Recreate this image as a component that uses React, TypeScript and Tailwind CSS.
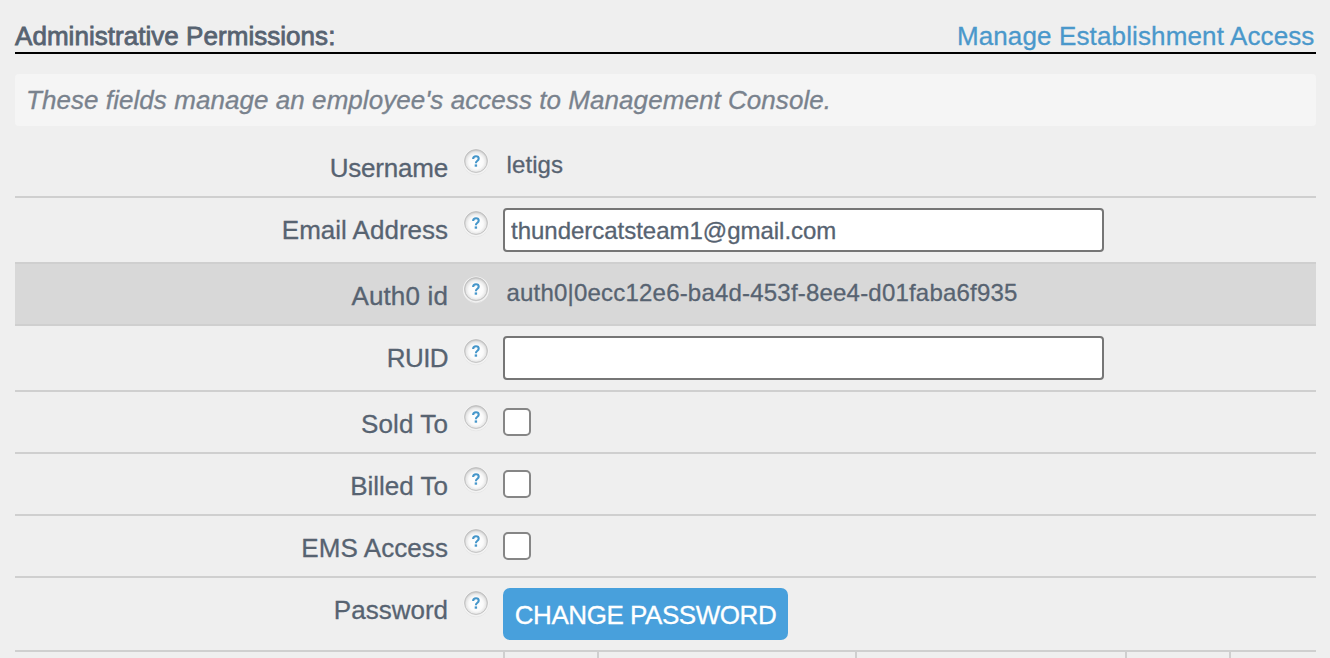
import type { ReactNode } from "react";

function HelpIcon() {
  return (
    <svg className="mt-[10px] ml-[12px] block h-[32px] w-[32px] shrink-0" viewBox="0 0 32 32" aria-hidden="true">
      <defs>
        <radialGradient id="helpFill" cx="50%" cy="54%" r="52%">
          <stop offset="0%" stopColor="#ffffff" />
          <stop offset="60%" stopColor="#fafafa" />
          <stop offset="84%" stopColor="#e7e7e7" />
          <stop offset="100%" stopColor="#c6c6c6" />
        </radialGradient>
      </defs>
      <circle cx="16" cy="16.2" r="12.6" fill="none" stroke="#e6e6e6" strokeWidth="1" />
      <circle cx="16" cy="15.4" r="12.4" fill="none" stroke="#f3f3f3" strokeWidth="1.2" />
      <circle cx="16" cy="15" r="11.4" fill="url(#helpFill)" stroke="#bfbfbf" strokeWidth="0.9" />
      <path d="M13.1 13C13.2 11.1 14.3 10.3 16 10.3C17.7 10.3 18.7 11.3 18.7 12.7C18.7 14.7 15.9 14.8 15.9 17.2" fill="none" stroke="#4596ca" strokeWidth="2.1" />
      <rect x="14.7" y="18.4" width="2.4" height="2.3" fill="#4596ca" />
    </svg>
  );
}

type RowProps = {
  label: string;
  height: string;
  tracking?: string;
  shaded?: boolean;
  children: ReactNode;
};

function Row({ label, height, tracking = "", shaded = false, children }: RowProps) {
  return (
    <div className={`flex shrink-0 items-start border-b-2 border-[#cfcfcf] ${height} ${shaded ? "bg-[#d8d8d8]" : ""}`}>
      <div className={`w-[433px] shrink-0 pt-[17px] text-right text-[26px] leading-[30px] whitespace-nowrap ${tracking}`}>{label}</div>
      <HelpIcon />
      <div className="ml-[11px]">{children}</div>
    </div>
  );
}

function Value({ children, tracking }: { children: ReactNode; tracking: string }) {
  return <div className={`pt-[15px] pl-[3.5px] text-[24px] leading-[28px] whitespace-nowrap ${tracking}`}>{children}</div>;
}

function TextField({ value, label }: { value: string; label: string }) {
  return (
    <input
      type="text"
      aria-label={label}
      defaultValue={value}
      className="mt-[10px] block h-[44px] w-[601px] rounded-[4px] border-2 border-[#767676] bg-white px-[6px] pt-[2px] text-[24px] leading-[28px] tracking-[-0.02px] outline-none"
    />
  );
}

function Checkbox({ label }: { label: string }) {
  return (
    <input
      type="checkbox"
      aria-label={label}
      className="mt-[16px] block h-[28px] w-[28px] appearance-none rounded-[5px] border-2 border-[#868686] bg-white"
    />
  );
}

export default function App() {
  return (
    <main className="flex h-[658px] w-[1330px] flex-col overflow-hidden bg-[#efefef] pr-[14px] pl-[15px] font-['Liberation_Sans',Arial,sans-serif] text-[#576371] [-webkit-text-stroke:0.3px_currentColor]">
      <header className="flex h-[54px] shrink-0 items-start justify-between border-b-2 border-black pt-[21px] text-[26px] leading-[30px]">
        <h1 className="tracking-[0.04px] [-webkit-text-stroke:0.8px_#576371]">Administrative Permissions:</h1>
        <a href="#" className="pr-[1.5px] tracking-[0.13px] text-[#4a98cb] [-webkit-text-stroke:0.3px_#4a98cb]">Manage Establishment Access</a>
      </header>
      <p className="mt-[20px] mb-[10px] h-[52px] shrink-0 rounded-[4px] bg-[#f5f5f5] pt-[11px] pl-[11px] text-[26px] leading-[30px] tracking-[0.06px] text-[#79828d] italic [-webkit-text-stroke:0.3px_#79828d]">
        These fields manage an employee's access to Management Console.
      </p>
      <section className="flex shrink-0 flex-col">
        <Row label="Username" height="h-[62px]" tracking="tracking-[-0.2px]">
          <Value tracking="tracking-[0.1px]">letigs</Value>
        </Row>
        <Row label="Email Address" height="h-[66px]">
          <TextField label="Email Address" value="thundercatsteam1@gmail.com" />
        </Row>
        <Row label="Auth0 id" height="h-[62px]" tracking="tracking-[0.15px]" shaded>
          <Value tracking="tracking-[0.2px]">auth0|0ecc12e6-ba4d-453f-8ee4-d01faba6f935</Value>
        </Row>
        <Row label="RUID" height="h-[66px]" tracking="tracking-[-0.6px]">
          <TextField label="RUID" value="" />
        </Row>
        <Row label="Sold To" height="h-[62px]" tracking="tracking-[0.1px]">
          <Checkbox label="Sold To" />
        </Row>
        <Row label="Billed To" height="h-[62px]">
          <Checkbox label="Billed To" />
        </Row>
        <Row label="EMS Access" height="h-[62px]" tracking="tracking-[0.08px]">
          <Checkbox label="EMS Access" />
        </Row>
        <Row label="Password" height="h-[74px]">
          <button type="button" className="mt-[10px] block h-[52px] w-[285px] rounded-[7px] bg-[#48a0dc] pt-[2px] text-[26px] leading-[30px] tracking-[-0.45px] whitespace-nowrap text-white [-webkit-text-stroke:0.3px_white]">
            CHANGE PASSWORD
          </button>
        </Row>
      </section>
      <div className="flex h-[6px] shrink-0">
        <div className="w-[490px] border-r-2 border-[#cfcfcf]" />
        <div className="w-[94px] border-r-2 border-[#cfcfcf]" />
        <div className="w-[258px] border-r-2 border-[#cfcfcf]" />
        <div className="w-[270px] border-r-2 border-[#cfcfcf]" />
        <div className="w-[104px] border-r-2 border-[#cfcfcf]" />
      </div>
    </main>
  );
}
